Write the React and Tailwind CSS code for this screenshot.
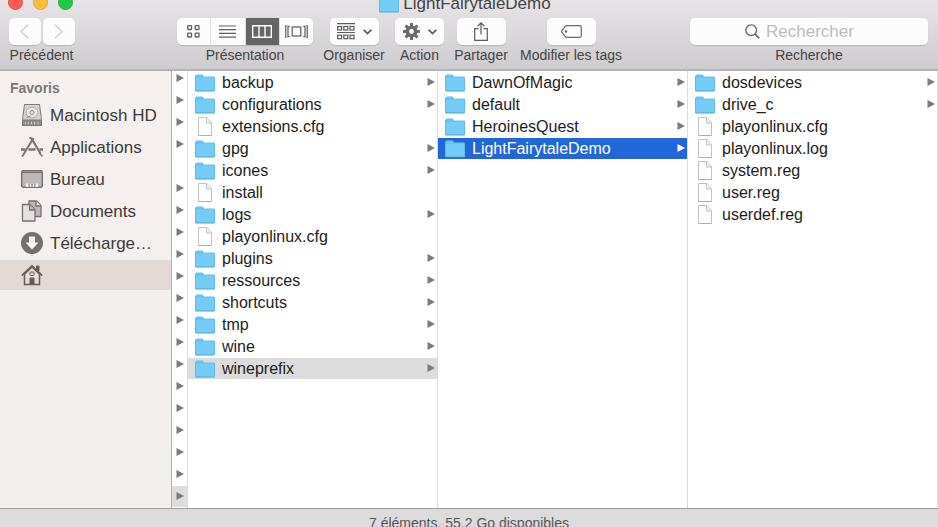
import { useState } from "react";

const favorites = [
  { name: "Macintosh HD", icon: DiskIcon },
  { name: "Applications", icon: AppsIcon },
  { name: "Bureau", icon: DesktopIcon },
  { name: "Documents", icon: DocumentsIcon },
  { name: "Télécharge…", icon: DownloadIcon },
  { name: "", icon: HomeIcon, active: true },
];

// one entry per row of the narrow parent column, false = plain file
const parentRows = Array.from({ length: 20 }, (_, i) => i !== 4);

const columns = [
  {
    selected: "wineprefix",
    highlight: "bg-[#dcdcdc]",
    items: [
      { name: "backup", folder: true },
      { name: "configurations", folder: true },
      { name: "extensions.cfg" },
      { name: "gpg", folder: true },
      { name: "icones", folder: true },
      { name: "install" },
      { name: "logs", folder: true },
      { name: "playonlinux.cfg" },
      { name: "plugins", folder: true },
      { name: "ressources", folder: true },
      { name: "shortcuts", folder: true },
      { name: "tmp", folder: true },
      { name: "wine", folder: true },
      { name: "wineprefix", folder: true },
    ],
  },
  {
    selected: "LightFairytaleDemo",
    highlight: "bg-[#2167d9] text-white",
    items: [
      { name: "DawnOfMagic", folder: true },
      { name: "default", folder: true },
      { name: "HeroinesQuest", folder: true },
      { name: "LightFairytaleDemo", folder: true },
    ],
  },
  {
    items: [
      { name: "dosdevices", folder: true },
      { name: "drive_c", folder: true },
      { name: "playonlinux.cfg" },
      { name: "playonlinux.log" },
      { name: "system.reg" },
      { name: "user.reg" },
      { name: "userdef.reg" },
    ],
  },
];

function DiskIcon() {
  return (
    <svg width="22" height="24" viewBox="0 0 22 24" fill="none" stroke="#7d7978">
      <path d="M3.500 1.500h15l2 15v6h-19v-6z" fill="#d6d2d1" strokeLinejoin="round" />
      <path d="M1.500 17h19v5.500h-19z" fill="#8f8b8a" />
      <ellipse cx="11" cy="9.500" rx="6" ry="5.500" stroke="#aeaaa9" fill="#e9e6e5" />
      <circle cx="11" cy="9.500" r="2" stroke="#8b8786" />
      <path d="M9.500 13l-4 1.500" stroke="#8b8786" />
      <path d="M4.500 19v2.500M7.500 19v2.500M10.500 19v2.500M13.500 19v2.500M17 19v2.500" stroke="#cfcbca" />
    </svg>
  );
}

function AppsIcon() {
  return (
    <svg width="24" height="20" viewBox="0 0 24 20" fill="none" stroke="#787473">
      <path d="M13.500 1L3.500 17.500l-1.500 2" strokeWidth="2" />
      <path d="M9.500 0.500l2 1 9 15" strokeWidth="2.200" />
      <path d="M19 15.500l3.500 4" strokeWidth="1.500" />
      <path d="M1 12.500h4.500M8.500 12.500h7M19.500 12.500H23" strokeWidth="2.400" />
    </svg>
  );
}

function DesktopIcon() {
  return (
    <svg width="22" height="18" viewBox="0 0 22 18" fill="none" stroke="#74706f">
      <rect x="0.700" y="0.700" width="20.600" height="16.600" rx="1.500" fill="#bdb9b8" strokeWidth="1.400" />
      <path d="M1 2.500h20" strokeWidth="1" />
      <path d="M5 13.500h12v3.500H5z" fill="#f4f0ef" stroke="none" />
      <path d="M8 13.500v3.500M11 13.500v3.500M14 13.500v3.500" strokeWidth="1" />
    </svg>
  );
}

function DocumentsIcon() {
  return (
    <svg width="22" height="22" viewBox="0 0 22 22" stroke="#74706f" strokeWidth="1.300" strokeLinejoin="round">
      <path d="M8 1h7.500l4.500 4.500v11H8z" fill="#bdb9b8" />
      <path d="M15 1v5h5" fill="#f4f0ef" />
      <path d="M1.500 4.500h7.500l5 5v11.500H1.500z" fill="#e6e2e1" />
      <path d="M8.500 4.500v5.500H14" fill="#bdb9b8" />
    </svg>
  );
}

function DownloadIcon() {
  return (
    <svg width="22" height="22" viewBox="0 0 22 22">
      <circle cx="11" cy="11" r="11" fill="#74706f" />
      <path d="M8 4.500h6v6h3.500L11 17.500l-6.500-7H8z" fill="#f4f0ef" />
    </svg>
  );
}

function HomeIcon() {
  return (
    <svg width="22" height="22" viewBox="0 0 22 22" fill="none" stroke="#655c59">
      <path d="M15.500 2h2.500v5l-2.500-2z" fill="#655c59" />
      <path d="M3.500 10v10.500h15V10L11 3z" fill="#e6dddb" strokeWidth="1.500" />
      <path d="M1 11.500L11 2l10 9.500" strokeWidth="1.800" />
      <rect x="9" y="8" width="4" height="3.500" rx="1" />
      <path d="M9 14h4v6.500H9z" fill="#655c59" />
    </svg>
  );
}

function FolderIcon() {
  return (
    <svg width="20" height="18" viewBox="0 0 20 18" className="shrink-0">
      <path d="M0.500 2q0-1.500 1-1.500h5.500q1 0 1.500 1l.5 1h10q0.500 0 0.500 0.500V17H0.500z" fill="#68c3ee" />
      <path d="M0.500 4h19V17H0.500z" fill="#75cdf7" />
      <path d="M0.500 17h19" stroke="#4ba3cf" />
      <path d="M0.500 2v15M19.500 3v14" stroke="#62bbe6" />
    </svg>
  );
}

function FileIcon() {
  return (
    <svg width="20" height="20" viewBox="0 0 20 20" className="shrink-0" fill="#fff" stroke="#c2c2c2">
      <path d="M3.500 0.500h8.500L16.500 5.500V18.500h-13z" strokeLinejoin="round" />
      <path d="M11.500 0.500v5.500H16.500" fill="#f0f0f0" strokeLinejoin="round" />
      <path d="M3.500 18.500h13" stroke="#adadad" />
    </svg>
  );
}

function Arrow({ className = "text-[#7b7b7b]" }) {
  return (
    <svg width="8" height="9" viewBox="0 0 8 9" className={`shrink-0 ${className}`} fill="currentColor">
      <path d="M0.500 0L8 4L0.500 8z" />
    </svg>
  );
}

function Chevron() {
  return (
    <svg width="9" height="6" viewBox="0 0 9 6" fill="none" stroke="#5c5c5c" strokeWidth="1.800">
      <path d="M0.700 0.800L4.500 4.600L8.300 0.800" />
    </svg>
  );
}

const viewIcons = {
  icons: (
    <svg width="13" height="13" viewBox="0 0 13 13" fill="none" stroke="currentColor" strokeWidth="1.300">
      <rect x="0.700" y="0.700" width="3.800" height="3.800" rx="0.500" />
      <rect x="8.200" y="0.700" width="3.800" height="3.800" rx="0.500" />
      <rect x="0.700" y="8.200" width="3.800" height="3.800" rx="0.500" />
      <rect x="8.200" y="8.200" width="3.800" height="3.800" rx="0.500" />
    </svg>
  ),
  list: (
    <svg width="17" height="13" viewBox="0 0 17 13" stroke="currentColor" strokeWidth="1.200">
      <path d="M0 1h17M0 4.700h17M0 8.400h17M0 12.100h17" />
    </svg>
  ),
  columns: (
    <svg width="20" height="13" viewBox="0 0 20 13" fill="none" stroke="currentColor" strokeWidth="1.400">
      <path d="M0.700 0.700h18.600v11.600H0.700z" />
      <path d="M7 0v13M13 0v13" strokeWidth="1.400" />
    </svg>
  ),
  flow: (
    <svg width="23" height="13" viewBox="0 0 23 13" fill="none" stroke="currentColor" strokeWidth="1.200">
      <path d="M0.800 0v13M22.200 0v13" />
      <path d="M3 0.500v12M3 1.500h1.800M3 11.500h1.800M20 0.500v12M20 1.500h-1.800M20 11.500h-1.800" />
      <rect x="7.200" y="2" width="8.600" height="9" />
    </svg>
  ),
};

const teeth = [0, 45, 90, 135, 180, 225, 270, 315];

function GearIcon() {
  return (
    <svg width="17" height="17" viewBox="0 0 17 17" fill="#6a6a6a">
      {teeth.map((angle) => (
        <rect key={angle} x="7" y="0" width="3" height="5" rx="0.600" transform={`rotate(${angle} 8.5 8.5)`} />
      ))}
      <circle cx="8.500" cy="8.500" r="4.200" fill="none" stroke="#6a6a6a" strokeWidth="3.600" />
    </svg>
  );
}

function ArrangeIcon() {
  return (
    <svg width="18" height="17" viewBox="0 0 18 17" fill="none" stroke="#5c5c5c" strokeWidth="1.200">
      <path d="M0 0.700h18M0 9.500h18" />
      {[0.6, 6.8, 13].map((x) => (
        <g key={x}>
          <rect x={x} y="3.500" width="4" height="3.500" />
          <rect x={x} y="12.200" width="4" height="3.500" />
        </g>
      ))}
    </svg>
  );
}

const buttonStyle =
  "flex h-[27px] items-center justify-center bg-[#fcfcfc] shadow-[0_1px_1px_rgba(0,0,0,0.15)]";

function ToolbarGroup({ label, className = "", children }) {
  return (
    <div className={`flex shrink-0 flex-col items-center ${className}`}>
      <div className="flex w-full justify-center">{children}</div>
      <span className="whitespace-nowrap text-[14px] leading-5 text-[#444345]">{label}</span>
    </div>
  );
}

function Toolbar() {
  const [view, setView] = useState("columns");

  return (
    <div className="flex items-start gap-[10px] pl-[9px] pr-[10px]">
      <ToolbarGroup label="Précédent" className="mr-[93px] w-[65px]">
        <div className="flex gap-[2px] text-[#cfcfcf]">
          <button aria-label="Précédent" className={`${buttonStyle} w-8 rounded-[5px]`}>
            <svg width="9" height="15" viewBox="0 0 9 15" fill="none" stroke="currentColor" strokeWidth="1.500">
              <path d="M8 0.700L1 7.500l7 6.800" />
            </svg>
          </button>
          <button aria-label="Suivant" className={`${buttonStyle} w-8 rounded-[5px]`}>
            <svg width="9" height="15" viewBox="0 0 9 15" fill="none" stroke="currentColor" strokeWidth="1.500">
              <path d="M1 0.700l7 6.800-7 6.800" />
            </svg>
          </button>
        </div>
      </ToolbarGroup>

      <ToolbarGroup label="Présentation" className="w-[136px]">
        <div className="flex w-full divide-x divide-[#e0e0e0] overflow-hidden rounded-[5px] shadow-[0_1px_1px_rgba(0,0,0,0.15)]">
          {Object.keys(viewIcons).map((key) => (
            <button
              key={key}
              aria-label={key}
              aria-pressed={view === key}
              onClick={() => setView(key)}
              className={`flex h-[27px] flex-1 items-center justify-center ${
                view === key ? "bg-[#666566] text-white" : "bg-[#fcfcfc] text-[#5f5f5f]"
              }`}
            >
              {viewIcons[key]}
            </button>
          ))}
        </div>
      </ToolbarGroup>

      <ToolbarGroup label="Organiser" className="w-[62px]">
        <button aria-label="Organiser" className={`${buttonStyle} w-[49px] gap-2 rounded-[5px]`}>
          <ArrangeIcon />
          <Chevron />
        </button>
      </ToolbarGroup>

      <ToolbarGroup label="Action" className="w-[49px]">
        <button aria-label="Action" className={`${buttonStyle} w-[49px] gap-2 rounded-[5px]`}>
          <GearIcon />
          <Chevron />
        </button>
      </ToolbarGroup>

      <ToolbarGroup label="Partager" className="w-[54px]">
        <button aria-label="Partager" className={`${buttonStyle} w-[49px] rounded-[5px]`}>
          <svg width="14" height="19" viewBox="0 0 14 19" fill="none" stroke="#5c5c5c" strokeWidth="1.200">
            <path d="M4.500 6.700H0.700v11.600h12.600V6.700H9.500" />
            <path d="M7 12.500V1M3.500 4.300L7 0.900l3.500 3.400" />
          </svg>
        </button>
      </ToolbarGroup>

      <ToolbarGroup label="Modifier les tags" className="w-[106px]">
        <button aria-label="Modifier les tags" className={`${buttonStyle} w-[49px] rounded-[5px]`}>
          <svg width="21" height="13" viewBox="0 0 21 13" fill="none" stroke="#6a6a6a" strokeWidth="1.200">
            <path d="M6 0.700h12.800q1.500 0 1.500 1.500v8.600q0 1.500-1.500 1.500H6q-1 0-2-1L0.900 7.500q-.6-1 0-2L4 1.700q1-1 2-1z" />
            <circle cx="5" cy="6.500" r="0.700" fill="#6a6a6a" />
          </svg>
        </button>
      </ToolbarGroup>

      <ToolbarGroup label="Recherche" className="ml-auto w-[238px]">
        <label className="flex h-[27px] w-full items-center gap-[6px] rounded-[5px] bg-[#fcfcfc] pl-[55px] shadow-[0_1px_1px_rgba(0,0,0,0.15)]">
          <svg width="15" height="15" viewBox="0 0 15 15" fill="none" stroke="#6a6a6a" strokeWidth="1.400" className="shrink-0">
            <circle cx="6.200" cy="6.200" r="5.300" />
            <path d="M10 10l4.300 4.300" strokeWidth="1.700" />
          </svg>
          <input
            type="search"
            aria-label="Recherche"
            placeholder="Rechercher"
            className="min-w-0 flex-1 bg-transparent text-[17px] leading-5 outline-none placeholder:text-[#bdbdbd]"
          />
        </label>
      </ToolbarGroup>
    </div>
  );
}

function Sidebar() {
  return (
    <nav className="flex w-[172px] shrink-0 flex-col border-r border-[#b3b0b0] bg-linear-to-b from-[#f5f0ee] to-[#f2efef]">
      <h2 className="pb-[2px] pl-[10px] pt-[7px] text-[14px] font-bold leading-5 text-[#7b7776]">Favoris</h2>
      <ul className="flex flex-col gap-[2px]">
        {favorites.map(({ name, icon: Icon, active }) => (
          <li key={name}>
            <a
              href="#"
              aria-label={name || "Départ"}
              className={`flex h-[30px] items-center gap-[6px] pl-5 text-[17px] leading-6 text-[#3d3a3a] ${
                active ? "bg-[#e3d9d6]" : ""
              }`}
            >
              <span className="flex w-6 justify-center">
                <Icon />
              </span>
              <span className="pt-[2px]">{name}</span>
            </a>
          </li>
        ))}
      </ul>
    </nav>
  );
}

function Column({ items, selected, highlight }) {
  return (
    <ul className="min-w-0 flex-1 border-r border-[#dcdcdc] pt-px">
      {items.map(({ name, folder }) => {
        const isSelected = name === selected;
        return (
          <li key={name} className="h-[22px]">
            <button
              className={`flex h-[21px] w-full items-center gap-[7px] pl-[7px] pr-[2px] text-left text-[16px] leading-5 ${
                isSelected ? highlight : ""
              }`}
            >
              {folder ? <FolderIcon /> : <FileIcon />}
              <span className="flex-1 truncate">{name}</span>
              {folder && (
                <Arrow className={isSelected && highlight.includes("text-white") ? "text-white" : "text-[#7b7b7b]"} />
              )}
            </button>
          </li>
        );
      })}
    </ul>
  );
}

export default function App() {
  return (
    <div className="flex h-screen flex-col overflow-hidden bg-white font-['Liberation_Sans',Arial,sans-serif] text-[#1c1c1c]">
      <header className="shrink-0 overflow-hidden border-b-2 border-[#b5b3b5] bg-linear-to-b from-[#e6e4e6] to-[#cfcccf] pb-1">
        {/* Title bar, its upper half is cut off by the window edge */}
        <div className="-mt-[14px] grid h-8 grid-cols-[1fr_auto_1fr] items-center pl-2 pr-3">
          <div className="flex gap-[10px]">
            <button aria-label="Fermer" className="size-[15px] rounded-full border border-[#e2504b] bg-[#fc5b57]" />
            <button aria-label="Réduire" className="size-[15px] rounded-full border border-[#e0a335] bg-[#fdbc40]" />
            <button aria-label="Agrandir" className="size-[15px] rounded-full border border-[#1eb33c] bg-[#23c748]" />
          </div>
          <h1 className="flex items-center gap-1 pt-1 pr-1 text-[17px] leading-6 text-[#444345]">
            <FolderIcon />
            LightFairytaleDemo
          </h1>
        </div>
        <Toolbar />
      </header>

      <main className="flex min-h-0 flex-1">
        <Sidebar />
        <ul className="flex w-4 shrink-0 flex-col justify-end overflow-hidden border-r border-[#dcdcdc]">
          {parentRows.map((hasArrow, i) => (
            <li key={i} className="h-[22px] shrink-0">
              <div
                className={`flex h-[21px] items-center pl-1 ${i === parentRows.length - 1 ? "bg-[#dcdcdc]" : ""}`}
              >
                {hasArrow && <Arrow />}
              </div>
            </li>
          ))}
        </ul>
        {columns.map((column, i) => (
          <Column key={i} {...column} />
        ))}
      </main>

      <footer className="h-[19px] shrink-0 overflow-hidden border-t border-[#9d9c9d] bg-[#dddcdd] pt-1 text-center text-[14px] leading-5 text-[#555]">
        7 éléments, 55,2 Go disponibles
      </footer>
    </div>
  );
}
